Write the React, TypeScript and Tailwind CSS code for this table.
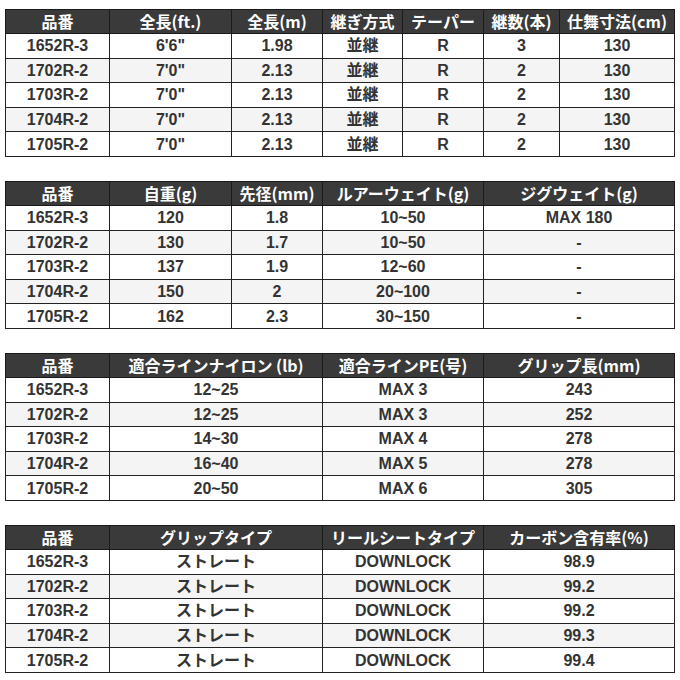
import clsx from "clsx";

type Spec = {
  widths: number[];
  head: string[];
  rows: string[][];
};

const models = ["1652R-3", "1702R-2", "1703R-2", "1704R-2", "1705R-2"];

const tables: Spec[] = [
  {
    widths: [104, 122, 91, 80, 81, 76, 115],
    head: ["品番", "全長(ft.)", "全長(m)", "継ぎ方式", "テーパー", "継数(本)", "仕舞寸法(cm)"],
    rows: [
      ["6'6\"", "1.98", "並継", "R", "3", "130"],
      ["7'0\"", "2.13", "並継", "R", "2", "130"],
      ["7'0\"", "2.13", "並継", "R", "2", "130"],
      ["7'0\"", "2.13", "並継", "R", "2", "130"],
      ["7'0\"", "2.13", "並継", "R", "2", "130"],
    ],
  },
  {
    widths: [104, 122, 91, 161, 191],
    head: ["品番", "自重(g)", "先径(mm)", "ルアーウェイト(g)", "ジグウェイト(g)"],
    rows: [
      ["120", "1.8", "10~50", "MAX 180"],
      ["130", "1.7", "10~50", "-"],
      ["137", "1.9", "12~60", "-"],
      ["150", "2", "20~100", "-"],
      ["162", "2.3", "30~150", "-"],
    ],
  },
  {
    widths: [104, 213, 161, 191],
    head: ["品番", "適合ラインナイロン (lb)", "適合ラインPE(号)", "グリップ長(mm)"],
    rows: [
      ["12~25", "MAX 3", "243"],
      ["12~25", "MAX 3", "252"],
      ["14~30", "MAX 4", "278"],
      ["16~40", "MAX 5", "278"],
      ["20~50", "MAX 6", "305"],
    ],
  },
  {
    widths: [104, 213, 161, 191],
    head: ["品番", "グリップタイプ", "リールシートタイプ", "カーボン含有率(%)"],
    rows: [
      ["ストレート", "DOWNLOCK", "98.9"],
      ["ストレート", "DOWNLOCK", "99.2"],
      ["ストレート", "DOWNLOCK", "99.2"],
      ["ストレート", "DOWNLOCK", "99.3"],
      ["ストレート", "DOWNLOCK", "99.4"],
    ],
  },
];

const isJa = (s: string) => /[\u3000-\u9fff]/.test(s);

function SpecTable({ widths, head, rows }: Spec) {
  return (
    <table className="w-[669px] table-fixed border-collapse border-[1.5px] border-[#222]">
      <colgroup>
        {widths.map((w, i) => (
          <col key={i} style={{ width: w }} />
        ))}
      </colgroup>
      <thead>
        <tr className="h-[24px] bg-[#3a3a3a]">
          {head.map((h, i) => (
            <th
              key={i}
              className="border-[1.5px] border-[#1a1a1a] p-0 pb-px text-center text-[16px] leading-none font-bold text-white [font-family:'Noto_Sans_CJK_JP',sans-serif]"
            >
              {h}
            </th>
          ))}
        </tr>
      </thead>
      <tbody>
        {rows.map((r, ri) => (
          <tr key={ri} className={clsx("h-[24.6px]", ri % 2 === 1 ? "bg-[#f4f4f4]" : "bg-white")}>
            {[models[ri], ...r].map((c, ci) => (
              <td
                key={ci}
                className={clsx(
                  "border-[1.5px] border-[#222] p-0 text-center text-[16px] leading-none font-bold text-[#333]",
                  isJa(c)
                    ? "pb-[3px] [font-family:'Noto_Sans_CJK_JP',sans-serif]"
                    : "pt-px [font-family:'Liberation_Sans','Noto_Sans_CJK_JP',sans-serif]",
                )}
              >
                {c}
              </td>
            ))}
          </tr>
        ))}
      </tbody>
    </table>
  );
}

export default function App() {
  return (
    <div className="flex h-[680px] w-[680px] flex-col gap-[24px] bg-white pt-[9px] pl-[5px]">
      {tables.map((t, i) => (
        <SpecTable key={i} {...t} />
      ))}
    </div>
  );
}
